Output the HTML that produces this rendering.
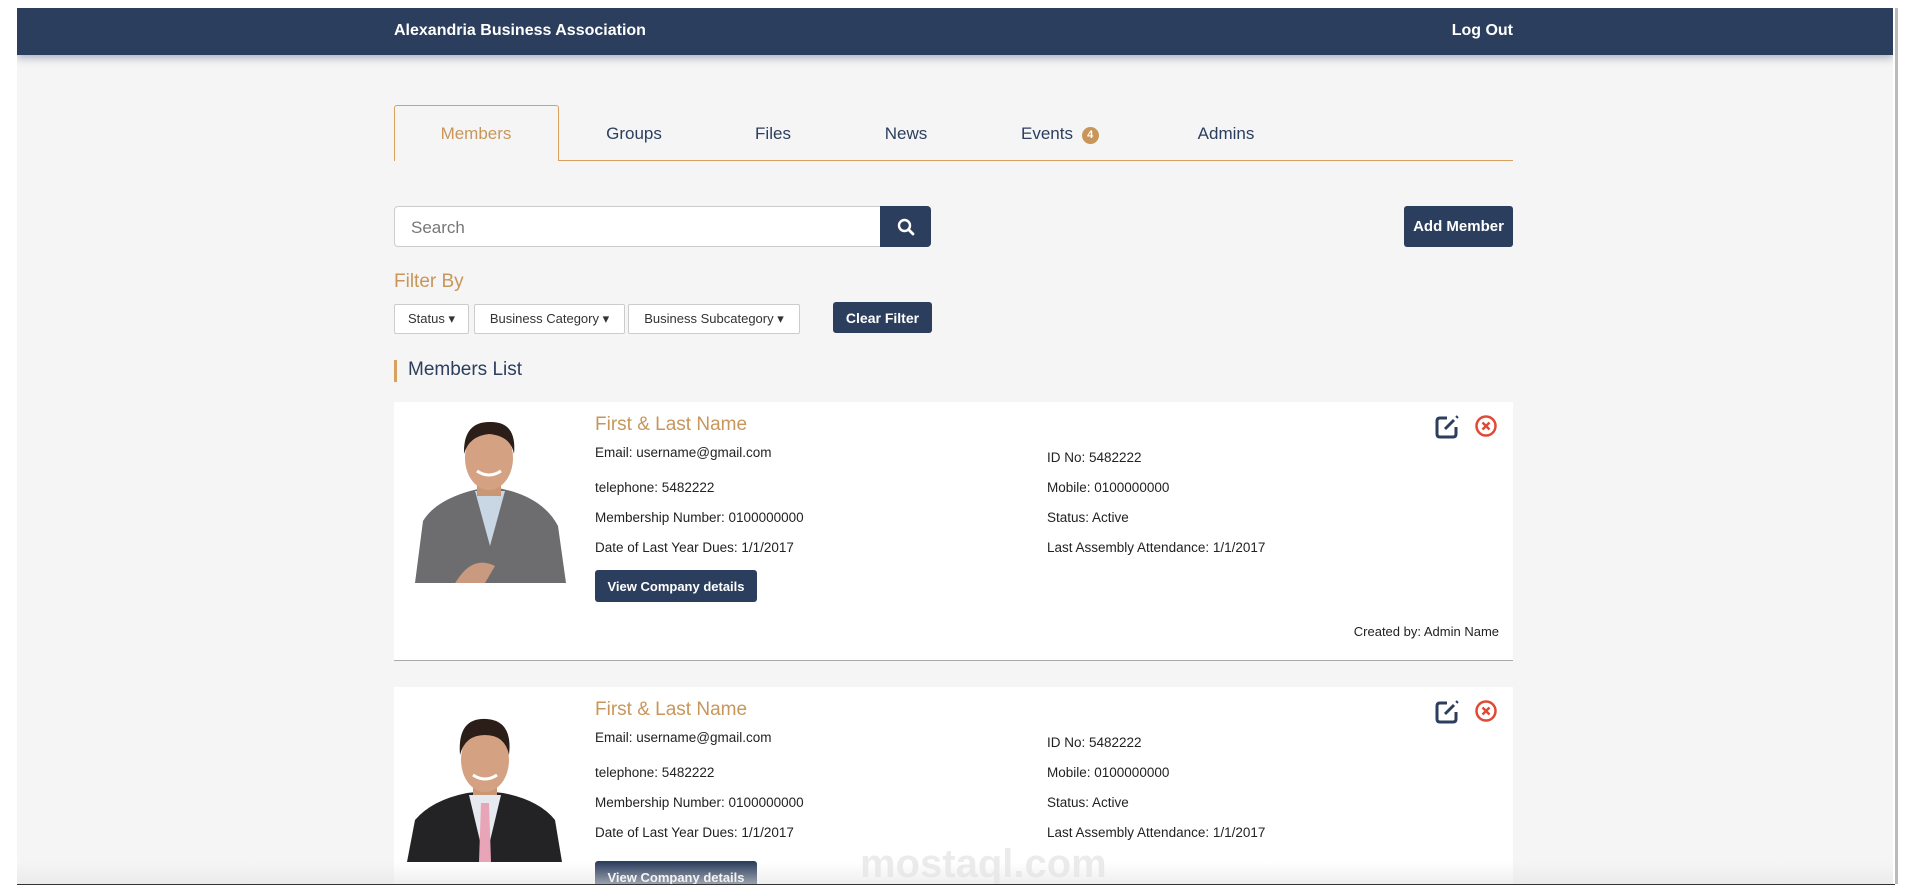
<!DOCTYPE html>
<html><head><meta charset="utf-8"><style>
*{box-sizing:border-box;margin:0;padding:0}
body{width:1920px;height:895px;background:#fff;font-family:"Liberation Sans",sans-serif;position:relative;overflow:hidden;color:#222}
.frame{position:absolute;left:17px;top:8px;width:1876px;height:876px;background:#f5f5f5;overflow:hidden}
.nav{position:absolute;left:0;top:0;width:100%;height:47px;background:#2c3e5e;box-shadow:0 3px 8px rgba(40,50,90,.35);color:#fff;font-weight:bold;font-size:16px}
.abs{position:absolute}
.tab{position:absolute;top:116px;font-size:17px;color:#2c3e5e;transform:translateX(-50%)}
.btn{position:absolute;background:#2c3e5e;color:#fff;font-weight:bold;border-radius:3px;display:flex;align-items:center;justify-content:center}
.dd{position:absolute;top:296px;height:30px;background:#fff;border:1px solid #ccc;border-radius:2px;font-size:13px;color:#333;display:flex;align-items:center;justify-content:center}
.card{position:absolute;left:377px;width:1119px;height:259px;background:#fff;border-bottom:1px solid #aaa}
.t{position:absolute;font-size:13.5px;color:#222;white-space:nowrap}
.name{position:absolute;left:201px;font-size:19px;color:#c8965a}
</style></head><body>
<div class="frame">
<div class="nav"><span class="abs" style="left:377px;top:14px">Alexandria Business Association</span><span class="abs" style="right:380px;top:14px">Log Out</span></div>
<div class="abs" style="left:377px;top:97px;width:165px;height:56px;border:1px solid #d8a25e;border-bottom:none;border-radius:3px 3px 0 0;background:#f5f5f5;z-index:2"></div>
<div class="abs" style="left:377px;top:152px;width:1119px;height:1px;background:#d8a25e"></div>
<div class="tab" style="left:459px;color:#c8965a;z-index:3">Members</div>
<div class="tab" style="left:617px">Groups</div>
<div class="tab" style="left:756px">Files</div>
<div class="tab" style="left:889px">News</div>
<div class="tab" style="transform:none;left:1004px">Events <span style="display:inline-block;width:17px;height:17px;border-radius:50%;background:#c8965a;color:#fff;font-size:11px;font-weight:bold;text-align:center;line-height:17px;vertical-align:1px;margin-left:4px">4</span></div>
<div class="tab" style="left:1209px">Admins</div>
<div class="abs" style="left:377px;top:198px;width:487px;height:41px;background:#fff;border:1px solid #ccc;border-radius:4px 0 0 4px;font-size:17px;color:#777;padding:11px 16px">Search</div>
<div class="btn" style="left:863px;top:198px;width:51px;height:41px;border-radius:0 4px 4px 0"><svg width="18" height="18" viewBox="0 0 18 18"><circle cx="7.5" cy="7.5" r="5.5" fill="none" stroke="#fff" stroke-width="2.4"/><path d="M11.5 11.5L16 16" stroke="#fff" stroke-width="2.8" stroke-linecap="round"/></svg></div>
<div class="btn" style="left:1387px;top:198px;width:109px;height:41px;font-size:15px">Add Member</div>
<div class="abs" style="left:377px;top:263px;font-size:19px;color:#c8965a">Filter By</div>
<div class="dd" style="left:377px;width:75px">Status ▾</div>
<div class="dd" style="left:457px;width:151px">Business Category ▾</div>
<div class="dd" style="left:611px;width:172px">Business Subcategory ▾</div>
<div class="btn" style="left:816px;top:294px;width:99px;height:31px;font-size:14px">Clear Filter</div>
<div class="abs" style="left:377px;top:352px;width:3px;height:22px;background:#d8a25e"></div>
<div class="abs" style="left:391px;top:351px;font-size:19px;color:#2c3e5e">Members List</div>

<div class="card" style="top:394px">
<svg class="abs" style="left:21px;top:14px" width="151" height="167" viewBox="0 0 151 167"><path d="M0 167L8 105Q20 85 55 75L75 70L96 75Q130 85 143 110L151 167Z" fill="#6d6d6f"/><path d="M60 75L75 130L90 75Z" fill="#c9d6e4"/><path d="M45 160Q60 140 80 150L70 167H40Z" fill="#c99a80"/><rect x="62" y="55" width="24" height="25" fill="#c99676"/><ellipse cx="74" cy="42" rx="24" ry="32" fill="#d4a283"/><path d="M49 38Q48 5 76 6Q102 6 99 38Q96 20 74 18Q54 20 49 38Z" fill="#2b1d17"/><path d="M62 55Q74 63 86 55" stroke="#fff" stroke-width="3" fill="none"/></svg>
<div class="name" style="top:12px">First &amp; Last Name</div>
<div class="t" style="left:201px;top:43px">Email: username@gmail.com</div>
<div class="t" style="left:201px;top:78px">telephone: 5482222</div>
<div class="t" style="left:201px;top:108px">Membership Number: 0100000000</div>
<div class="t" style="left:201px;top:138px">Date of Last Year Dues: 1/1/2017</div>
<div class="t" style="left:653px;top:48px">ID No: 5482222</div>
<div class="t" style="left:653px;top:78px">Mobile: 0100000000</div>
<div class="t" style="left:653px;top:108px">Status: Active</div>
<div class="t" style="left:653px;top:138px">Last Assembly Attendance: 1/1/2017</div>
<div class="btn" style="left:201px;top:168px;width:162px;height:32px;font-size:13px">View Company details</div>
<div class="t" style="right:14px;top:222px;font-size:13px">Created by: Admin Name</div>
<svg class="abs" style="left:1040px;top:12px" width="26" height="26" viewBox="0 0 26 26"><path d="M13 4H6Q3 4 3 7V20Q3 23 6 23H19Q22 23 22 20V13" fill="none" stroke="#2c3e5e" stroke-width="3"/><path d="M11 15L20 6" stroke="#2c3e5e" stroke-width="3"/><path d="M22 2L24 4" stroke="#2c3e5e" stroke-width="2"/></svg>
<svg class="abs" style="left:1080px;top:12px" width="24" height="24" viewBox="0 0 24 24"><circle cx="12" cy="12" r="9.5" fill="none" stroke="#e04a35" stroke-width="2.5"/><path d="M8.5 8.5L15.5 15.5M15.5 8.5L8.5 15.5" stroke="#e04a35" stroke-width="2.5"/></svg>
</div>

<div class="card" style="top:679px">
<svg class="abs" style="left:13px;top:28px" width="155" height="147" viewBox="0 0 155 147"><path d="M0 147L8 105Q25 85 60 78L78 76L96 78Q132 85 148 105L155 147Z" fill="#232325"/><path d="M62 80L78 147L94 80Z" fill="#e6e9ef"/><path d="M74 88L82 88L84 147H72Z" fill="#e9a5b8"/><rect x="66" y="55" width="24" height="25" fill="#c99676"/><ellipse cx="78" cy="45" rx="24" ry="32" fill="#d4a283"/><path d="M53 40Q50 2 80 4Q106 6 102 40Q98 20 78 20Q58 20 53 40Z" fill="#2b1d17"/><path d="M66 60Q78 68 90 60" stroke="#fff" stroke-width="3" fill="none"/></svg>
<div class="name" style="top:12px">First &amp; Last Name</div>
<div class="t" style="left:201px;top:43px">Email: username@gmail.com</div>
<div class="t" style="left:201px;top:78px">telephone: 5482222</div>
<div class="t" style="left:201px;top:108px">Membership Number: 0100000000</div>
<div class="t" style="left:201px;top:138px">Date of Last Year Dues: 1/1/2017</div>
<div class="t" style="left:653px;top:48px">ID No: 5482222</div>
<div class="t" style="left:653px;top:78px">Mobile: 0100000000</div>
<div class="t" style="left:653px;top:108px">Status: Active</div>
<div class="t" style="left:653px;top:138px">Last Assembly Attendance: 1/1/2017</div>
<div class="btn" style="left:201px;top:174px;width:162px;height:32px;font-size:13px">View Company details</div>
<svg class="abs" style="left:1040px;top:12px" width="26" height="26" viewBox="0 0 26 26"><path d="M13 4H6Q3 4 3 7V20Q3 23 6 23H19Q22 23 22 20V13" fill="none" stroke="#2c3e5e" stroke-width="3"/><path d="M11 15L20 6" stroke="#2c3e5e" stroke-width="3"/><path d="M22 2L24 4" stroke="#2c3e5e" stroke-width="2"/></svg>
<svg class="abs" style="left:1080px;top:12px" width="24" height="24" viewBox="0 0 24 24"><circle cx="12" cy="12" r="9.5" fill="none" stroke="#e04a35" stroke-width="2.5"/><path d="M8.5 8.5L15.5 15.5M15.5 8.5L8.5 15.5" stroke="#e04a35" stroke-width="2.5"/></svg>
<div class="abs" style="left:466px;top:155px;font-size:40px;font-weight:bold;color:rgba(190,190,190,.3)">mostaql.com</div>
</div>
<div class="abs" style="left:0;bottom:0;width:100%;height:22px;background:linear-gradient(rgba(245,245,245,0),rgba(228,228,228,.6))"></div>
</div>
<div class="abs" style="left:1895px;top:8px;width:3px;height:876px;background:#bbb"></div>
<div class="abs" style="left:17px;top:884px;width:1878px;height:1px;background:#333"></div>
</body></html>
